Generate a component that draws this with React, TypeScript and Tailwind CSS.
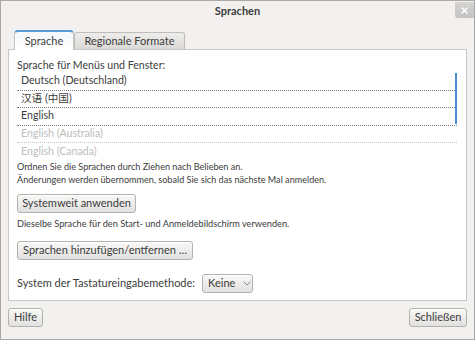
import React from "react";

const btn =
  "flex items-center justify-center rounded-[3px] border border-[#b4b2ae] bg-gradient-to-b from-[#f8f8f7] to-[#e2e1df] text-[#3c3c3c] shadow-[inset_0_1px_0_#ffffff]";

function Row({ text, dim, last }: { text: string; dim?: boolean; last?: boolean }) {
  return (
    <div
      className={
        "h-[17.5px] flex items-center pl-[4px] border-b border-dotted " +
        (dim ? "border-[#c4c4c4] text-[#bdbdbd]" : "border-[#7a7a7a] text-[#3c3c3c]") +
        (last ? " border-b-0" : "")
      }
    >
      {text}
    </div>
  );
}

export default function App() {
  return (
    <div
      className="w-[475px] h-[340px] bg-[#f2f1f0] border border-[#a9a8a5] flex flex-col relative overflow-hidden text-[#3c3c3c]"
      style={{ fontFamily: 'Lato, "Noto Sans CJK SC", sans-serif' }}
    >
      {/* Title bar */}
      <div className="h-[21px] flex items-center justify-center text-[11px] font-bold text-[#3c3c3c]">
        Sprachen
      </div>
      <div className="absolute top-[1px] right-0 w-[19px] h-[16px] rounded-bl-[3px] bg-gradient-to-b from-[#d4d3d1] to-[#c4c3c1] flex items-center justify-center">
        <svg width="7" height="7" viewBox="0 0 7 7">
          <path d="M1 1 L6 6 M6 1 L1 6" stroke="#ffffff" strokeWidth="1.6" strokeLinecap="round" />
        </svg>
      </div>

      {/* Tabs */}
      <div className="h-[27px] flex items-end pl-[13px] relative z-10">
        <div className="h-[20px] w-[60px] mb-[-1px] rounded-t-[4px] border border-b-0 border-[#c3c3c3] border-t-[#5b9bd5] border-t-2 bg-gradient-to-b from-[#f6f8fa] to-[#ffffff] flex items-center justify-center text-[11px]">
          Sprache
        </div>
        <div className="h-[17px] w-[111px] rounded-t-[3px] border border-b-0 border-[#bebdba] bg-gradient-to-b from-[#eeedeb] to-[#dad9d6] flex items-center justify-center text-[11px]">
          Regionale Formate
        </div>
      </div>

      {/* Panel */}
      <div className="mx-[7px] h-[252px] bg-white border border-[#c8c7c4] flex flex-col pl-[8px] pr-[9px] text-[10.6px]">
        <div className="mt-[9px] h-[13px] leading-[13px]">Sprache für Menüs und Fenster:</div>
        <div className="relative mt-[1px] h-[86px] overflow-hidden">
          <Row text="Deutsch (Deutschland)" />
          <Row text="汉语 (中国)" />
          <Row text="English" />
          <Row text="English (Australia)" dim />
          <Row text="English (Canada)" dim last />
          <div className="absolute right-0 top-[-1px] w-[2px] h-[52px] bg-[#4a90d9]" />
        </div>
        <div className="mt-[1px] text-[9.1px] leading-[13px]">
          <div>Ordnen Sie die Sprachen durch Ziehen nach Belieben an.</div>
          <div>Änderungen werden übernommen, sobald Sie sich das nächste Mal anmelden.</div>
        </div>
        <div className="mt-[8px] flex">
          <div className={btn + " h-[19px] w-[119px] text-[11px]"}>Systemweit anwenden</div>
        </div>
        <div className="mt-[4px] text-[9.2px] leading-[14px]">
          Dieselbe Sprache für den Start- und Anmeldebildschirm verwenden.
        </div>
        <div className="mt-[10px] flex">
          <div className={btn + " h-[19px] w-[176px] text-[11px]"}>Sprachen hinzufügen/entfernen …</div>
        </div>
        <div className="mt-[14px] flex items-center h-[19px]">
          <span className="text-[11px]">System der Tastatureingabemethode:</span>
          <div className={btn + " ml-[7px] h-[19px] w-[51px] text-[11px] justify-start pl-[5px]"}>
            <span>Keine</span>
            <svg className="ml-[8px]" width="8" height="5" viewBox="0 0 8 5">
              <path d="M0.5 0.5 L4 4 L7.5 0.5" stroke="#8a8a8a" strokeWidth="1" fill="none" />
            </svg>
          </div>
        </div>
      </div>

      {/* Bottom buttons */}
      <div className="flex justify-between mt-[7px] px-[7px]">
        <div className={btn + " h-[19px] w-[35px] text-[11px]"}>Hilfe</div>
        <div className={btn + " h-[19px] w-[58px] text-[11px]"}>Schließen</div>
      </div>
    </div>
  );
}
